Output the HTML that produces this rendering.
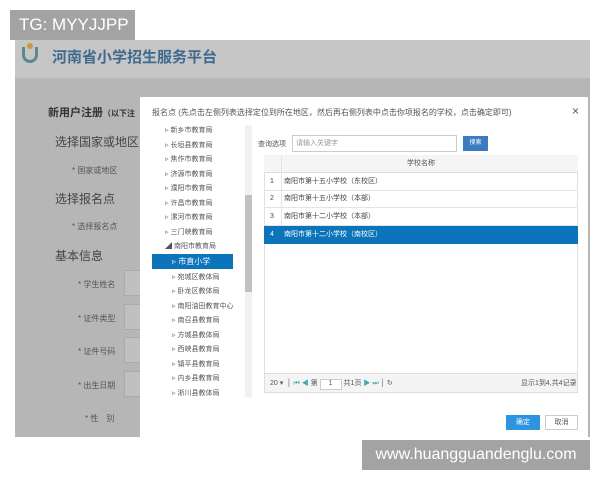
<!DOCTYPE html>
<html><head><meta charset="utf-8"><style>
*{margin:0;padding:0;box-sizing:border-box}
body{width:600px;height:480px;background:#fff;position:relative;overflow:hidden;font-family:"Liberation Sans","Noto Sans CJK SC",sans-serif}
.a{position:absolute}
.page{left:15px;top:40px;width:575px;height:397px;background:#b6b6b6}
.hdr{left:15px;top:40px;width:575px;height:38px;background:#c6c6c6}
.tg{left:10px;top:10px;width:125px;height:30px;background:#a3a3a3;color:#fff;font-size:17px;line-height:30px;padding-left:9px}
.url{left:362px;top:440px;width:228px;height:30px;background:#a3a3a3;color:#fff;font-size:16px;line-height:30px;text-align:center}
.dlg{left:140px;top:97px;width:448px;height:340px;background:#fff}
.t{font-size:8px;color:#555;white-space:nowrap}
.tree div{position:absolute;font-size:7px;color:#555;white-space:nowrap}
.row{position:absolute;left:264px;width:314px;height:18px;border-bottom:1px solid #e4e4e4;font-size:7px;color:#444;line-height:18px}
.row span{position:absolute;left:6px}
.row b{position:absolute;left:20px;font-weight:normal}
</style></head><body>
<div class="a page"></div>
<div class="a hdr"></div>
<div class="a tg">TG: MYYJJPP</div>
<div class="a" style="left:22px;top:47px;width:16px;height:16px;border-radius:0 0 8px 8px;border:3px solid #5a8a8a;border-top:none"></div>
<div class="a" style="left:27px;top:43px;width:6px;height:6px;border-radius:50%;background:#c89a40"></div>
<div class="a" style="left:52px;top:46px;font-size:15px;font-weight:bold;color:#3f6a8e">河南省小学招生服务平台</div>
<div class="a" style="left:48px;top:104px;font-size:11px;font-weight:bold;color:#333">新用户注册<span style="font-size:8px">（以下注</span></div>
<div class="a" style="left:55px;top:133px;font-size:12px;color:#444">选择国家或地区</div>
<div class="a" style="left:72px;top:165px;font-size:8px;color:#555">* 国家或地区</div>
<div class="a" style="left:55px;top:190px;font-size:12px;color:#444">选择报名点</div>
<div class="a" style="left:72px;top:221px;font-size:8px;color:#555">* 选择报名点</div>
<div class="a" style="left:55px;top:247px;font-size:12px;color:#444">基本信息</div>
<div class="a" style="left:78px;top:279px;font-size:8px;color:#555">* 学生姓名</div>
<div class="a" style="left:78px;top:313px;font-size:8px;color:#555">* 证件类型</div>
<div class="a" style="left:78px;top:346px;font-size:8px;color:#555">* 证件号码</div>
<div class="a" style="left:78px;top:380px;font-size:8px;color:#555">* 出生日期</div>
<div class="a" style="left:85px;top:413px;font-size:8px;color:#555">* 性　别</div>
<div class="a" style="left:124px;top:270px;width:18px;height:26px;background:#c0c0c0;border:1px solid #aaa"></div>
<div class="a" style="left:124px;top:304px;width:18px;height:26px;background:#c0c0c0;border:1px solid #aaa"></div>
<div class="a" style="left:124px;top:337px;width:18px;height:26px;background:#c0c0c0;border:1px solid #aaa"></div>
<div class="a" style="left:124px;top:371px;width:18px;height:26px;background:#c0c0c0;border:1px solid #aaa"></div>
<div class="a dlg"></div>
<div class="a t" style="left:152px;top:107px">报名点 (先点击左侧列表选择定位到所在地区，然后再右侧列表中点击你项报名的学校，点击确定即可)</div>
<div class="a" style="left:572px;top:104px;font-size:12px;color:#555">×</div>
<div class="a tree">
<div style="left:165px;top:125px">▹ 新乡市教育局</div>
<div style="left:165px;top:140px">▹ 长垣县教育局</div>
<div style="left:165px;top:154px">▹ 焦作市教育局</div>
<div style="left:165px;top:169px">▹ 济源市教育局</div>
<div style="left:165px;top:183px">▹ 濮阳市教育局</div>
<div style="left:165px;top:198px">▹ 许昌市教育局</div>
<div style="left:165px;top:212px">▹ 漯河市教育局</div>
<div style="left:165px;top:227px">▹ 三门峡教育局</div>
<div style="left:165px;top:241px">◢ 南阳市教育局</div>
<div style="left:152px;top:254px;width:81px;height:15px;background:#0b74bb;color:#fff;font-size:8px;line-height:15px;padding-left:20px">▹ 市直小学</div>
<div style="left:172px;top:272px">▹ 宛城区教体局</div>
<div style="left:172px;top:286px">▹ 卧龙区教体局</div>
<div style="left:172px;top:301px">▹ 南阳油田教育中心</div>
<div style="left:172px;top:315px">▹ 南召县教育局</div>
<div style="left:172px;top:330px">▹ 方城县教体局</div>
<div style="left:172px;top:344px">▹ 西峡县教育局</div>
<div style="left:172px;top:359px">▹ 镇平县教育局</div>
<div style="left:172px;top:373px">▹ 内乡县教育局</div>
<div style="left:172px;top:388px">▹ 淅川县教体局</div>
</div>
<div class="a" style="left:245px;top:125px;width:7px;height:272px;background:#f1f1f1"></div>
<div class="a" style="left:245px;top:195px;width:7px;height:97px;background:#c1c1c1"></div>
<div class="a t" style="left:258px;top:139px;font-size:7px">查询选项</div>
<div class="a" style="left:292px;top:135px;width:165px;height:17px;border:1px solid #ccc;font-size:7px;color:#999;line-height:15px;padding-left:3px">请输入关键字</div>
<div class="a" style="left:463px;top:136px;width:25px;height:15px;background:#3a7cbf;color:#fff;font-size:6px;line-height:15px;text-align:center">搜索</div>
<div class="a" style="left:264px;top:155px;width:314px;height:238px;border:1px solid #e0e0e0"></div>
<div class="a" style="left:264px;top:155px;width:314px;height:18px;background:#f5f5f5;border-bottom:1px solid #ddd;font-size:7px;color:#555;text-align:center;line-height:18px">学校名称</div>
<div class="a" style="left:281px;top:155px;width:1px;height:88px;background:#e4e4e4"></div>
<div class="row" style="top:173px"><span>1</span><b>南阳市第十五小学校（东校区）</b></div>
<div class="row" style="top:190px"><span>2</span><b>南阳市第十五小学校（本部）</b></div>
<div class="row" style="top:208px"><span>3</span><b>南阳市第十二小学校（本部）</b></div>
<div class="row" style="top:226px;background:#0b74bb;color:#fff;border:none"><span>4</span><b>南阳市第十二小学校（南校区）</b></div>
<div class="a" style="left:264px;top:373px;width:314px;height:20px;background:#f4f4f4;border:1px solid #ddd"></div>
<div class="a t" style="left:270px;top:378px;font-size:7px">20 ▾ &nbsp;│ <span style="color:#4aa">⏮ ◀</span> 第 <span style="display:inline-block;width:22px;height:11px;border:1px solid #ccc;background:#fff;text-align:center">1</span> 共1页 <span style="color:#4aa">▶ ⏭</span> │ ↻</div>
<div class="a t" style="left:521px;top:378px;font-size:7px">显示1到4,共4记录</div>
<div class="a" style="left:506px;top:415px;width:34px;height:15px;background:#2d95e0;color:#fff;font-size:7px;line-height:15px;text-align:center">确定</div>
<div class="a" style="left:545px;top:415px;width:33px;height:15px;border:1px solid #ccc;color:#555;font-size:7px;line-height:13px;text-align:center">取消</div>
<div class="a url">www.huangguandenglu.com</div>
</body></html>
